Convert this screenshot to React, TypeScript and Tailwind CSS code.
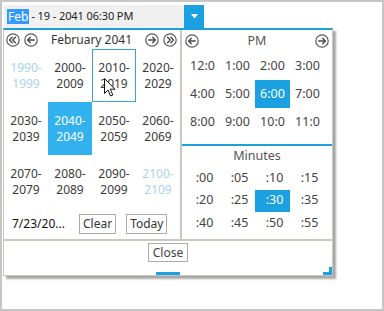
import React from "react";

const FONT = { fontFamily: '"Segoe UI", "Noto Sans", "Open Sans", sans-serif' };

function NavIcon({ dir, double }: { dir: "l" | "r"; double?: boolean }) {
  const flip = dir === "r" ? "scale(-1,1) translate(-14,0)" : undefined;
  return (
    <svg width="14" height="14" viewBox="0 0 14 14" className="shrink-0">
      <circle cx="7" cy="7" r="6.2" fill="white" stroke="#5a5a5a" strokeWidth="1.2" />
      <g transform={flip} stroke="#444" strokeWidth="1.3" fill="none" strokeLinecap="round" strokeLinejoin="round">
        {double ? (
          <>
            <path d="M6.2 4.3 L3.6 7 L6.2 9.7" />
            <path d="M9.4 4.3 L6.8 7 L9.4 9.7" />
          </>
        ) : (
          <>
            <path d="M6.3 4.3 L3.7 7 L6.3 9.7" />
            <path d="M3.9 7 H10.3" />
          </>
        )}
      </g>
    </svg>
  );
}

const decades = [
  { a: "1990-", b: "1999", dim: true },
  { a: "2000-", b: "2009" },
  { a: "2010-", b: "2019", hover: true },
  { a: "2020-", b: "2029" },
  { a: "2030-", b: "2039" },
  { a: "2040-", b: "2049", sel: true },
  { a: "2050-", b: "2059" },
  { a: "2060-", b: "2069" },
  { a: "2070-", b: "2079" },
  { a: "2080-", b: "2089" },
  { a: "2090-", b: "2099" },
  { a: "2100-", b: "2109", dim: true },
];

const hours = ["12:0", "1:00", "2:00", "3:00", "4:00", "5:00", "6:00", "7:00", "8:00", "9:00", "10:0", "11:0"];
const minutes = [":00", ":05", ":10", ":15", ":20", ":25", ":30", ":35", ":40", ":45", ":50", ":55"];

export default function App() {
  return (
    <div style={FONT} className="w-[384px] h-[311px] border-2 border-[#c6c6c6] bg-white pl-[1px] pt-[3px] text-[12.5px] text-[#333] relative overflow-hidden">
      {/* input */}
      <div className="flex h-[23px] w-[200px] ml-[1px]">
        <div className="w-[180px] bg-[#f0f0f0] flex items-center pl-[3px] text-[12px] text-[#222] whitespace-nowrap">
          <span className="bg-[#3399ff] text-white px-[1px] leading-[15px]">Feb</span>
          <span className="ml-[2px] text-[11px] tracking-[-0.1px]">- 19 - 2041 06:30 PM</span>
        </div>
        <div className="w-[20px] bg-[#1ba1e2] flex items-center justify-center">
          <svg width="7" height="5" viewBox="0 0 7 5"><path d="M0 0 H7 L3.5 4.5 Z" fill="white" /></svg>
        </div>
      </div>

      {/* popup */}
      <div className="w-[330px] border-t-2 border-t-[#1ba1e2] border-x border-b border-x-[#c8c8bc] border-b-[#c8c8bc] bg-white shadow-[3px_3px_2px_rgba(0,0,0,0.35)] flex flex-col">
        <div className="flex h-[211px] border-b-2 border-[#c8c8bc]">
          {/* left: decades */}
          <div className="w-[178px] border-r-2 border-[#c8c8bc] flex flex-col relative">
            <div className="h-[19px] flex items-center pl-[2px] pr-[3px] gap-[4px]">
              <NavIcon dir="l" double />
              <NavIcon dir="l" />
              <div className="flex-1 text-center text-[12px] text-[#333]">February 2041</div>
              <NavIcon dir="r" />
              <NavIcon dir="r" double />
            </div>
            <div className="grid grid-cols-[repeat(4,44px)] grid-rows-[repeat(3,53px)] text-[12px]">
              {decades.map((d) => (
                <div
                  key={d.a}
                  className={`flex flex-col items-center justify-center ${
                    d.sel ? "bg-[#31b2ee] text-white" : d.dim ? "text-[#abd3ec]" : "text-[#3a3a3a]"
                  } ${d.hover ? "border border-[#3d9fd8]" : ""}`}
                >
                  <span className="leading-[16px]">{d.a}</span>
                  <span className="leading-[16px]">{d.b}</span>
                </div>
              ))}
            </div>
            <div className="flex items-center h-[31px] pl-[8px]">
              <span className="text-[#111] w-[67px] pt-[1px] text-[12px]">7/23/20...</span>
              <button className="h-[20px] border border-[#aaa] px-[3px] leading-[17px] text-[#333] text-[12px]">Clear</button>
              <button className="h-[20px] border border-[#aaa] px-[3px] leading-[17px] text-[#333] text-[12px] ml-[10px]">Today</button>
            </div>
            <svg className="absolute left-[100px] top-[48px]" width="12" height="19" viewBox="0 0 12 19">
              <path d="M0.5 0.5 V15.5 L4 12 L6.5 18 L8.8 17 L6.3 11.2 H11 Z" fill="white" stroke="#111" strokeWidth="1" strokeLinejoin="round" />
            </svg>
          </div>

          {/* right: time */}
          <div className="flex-1 flex flex-col">
            <div className="h-[22px] flex items-center px-[3px]">
              <NavIcon dir="l" />
              <div className="flex-1 text-center text-[#555]">PM</div>
              <NavIcon dir="r" />
            </div>
            <div className="grid grid-cols-[repeat(4,35px)] grid-rows-[repeat(3,28px)] pl-[3px]">
              {hours.map((h) => (
                <div key={h} className={`flex items-center justify-center ${h === "6:00" ? "bg-[#1ba1e2] text-white" : "text-[#444]"}`}>
                  {h}
                </div>
              ))}
            </div>
            <div className="mt-[8px] h-[2px] bg-[#1ba1e2]" />
            <div className="h-[21px] flex items-center justify-center text-[#555]">Minutes</div>
            <div className="grid grid-cols-[repeat(4,35px)] grid-rows-[repeat(3,22.5px)] pl-[3px]">
              {minutes.map((m) => (
                <div key={m} className={`flex items-center justify-center pl-[4px] ${m === ":30" ? "bg-[#1ba1e2] text-white" : "text-[#444]"}`}>
                  {m}
                </div>
              ))}
            </div>
          </div>
        </div>

        {/* footer */}
        <div className="h-[34px] flex flex-col items-center relative">
          <button className="mt-[2px] h-[19px] border border-[#aaa] px-[4px] leading-[16px] text-[#444] text-[12px]">Close</button>
          <div className="mt-auto h-[3px] w-[24px] bg-[#1ba1e2]" />
          <svg className="absolute right-0 bottom-0" width="9" height="8" viewBox="0 0 9 8">
            <path d="M6 0 H9 V8 H0 V5 H6 Z" fill="#1ba1e2" />
          </svg>
        </div>
      </div>
    </div>
  );
}
